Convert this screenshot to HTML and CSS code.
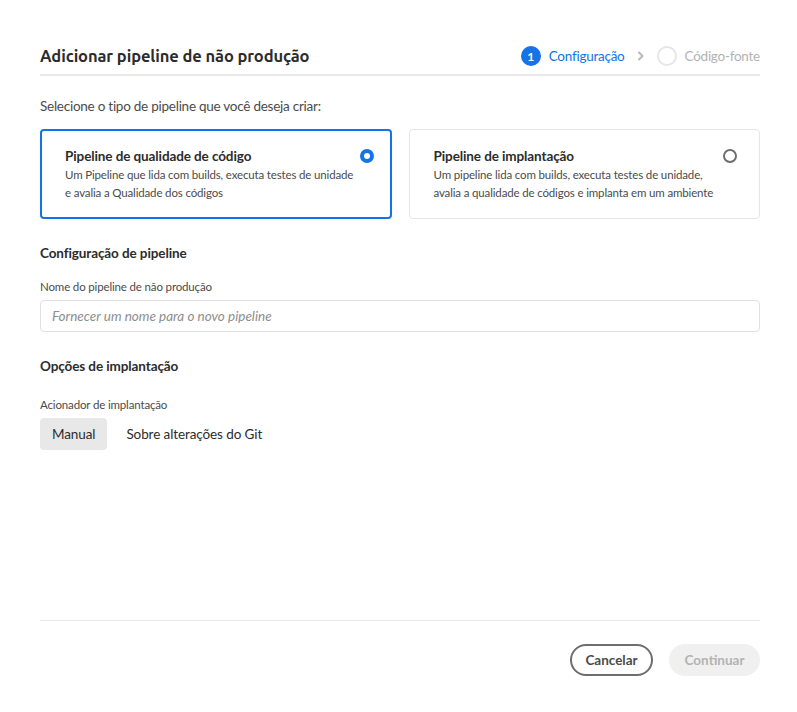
FILE: index.html
```html
<!DOCTYPE html>
<html lang="pt">
<head>
<meta charset="utf-8">
<link rel="stylesheet" href="styles.css">
</head>
<body>
<div class="dialog">
  <header class="head">
    <h1 class="title">Adicionar pipeline de não produção</h1>
    <div class="stepper">
      <span class="step-num">1</span>
      <span class="step-label active">Configuração</span>
      <svg class="chev" width="8" height="10" viewBox="0 0 8 10"><path d="M2 1.5 L5.5 5 L2 8.5" fill="none" stroke="#b8b8b8" stroke-width="2" stroke-linecap="round" stroke-linejoin="round"/></svg>
      <span class="step-empty"></span>
      <span class="step-label">Código-fonte</span>
    </div>
  </header>

  <p class="lead">Selecione o tipo de pipeline que você deseja criar:</p>

  <div class="cards">
    <div class="card selected">
      <div class="card-text">
        <div class="card-title">Pipeline de qualidade de código</div>
        <div class="card-desc">Um Pipeline que lida com builds, executa testes de unidade e avalia a Qualidade dos códigos</div>
      </div>
      <span class="radio on"></span>
    </div>
    <div class="card">
      <div class="card-text">
        <div class="card-title">Pipeline de implantação</div>
        <div class="card-desc">Um pipeline lida com builds, executa testes de unidade, avalia a qualidade de códigos e implanta em um ambiente</div>
      </div>
      <span class="radio"></span>
    </div>
  </div>

  <h2 class="section">Configuração de pipeline</h2>
  <label class="label">Nome do pipeline de não produção</label>
  <div class="input">Fornecer um nome para o novo pipeline</div>

  <h2 class="section">Opções de implantação</h2>
  <label class="label second">Acionador de implantação</label>
  <div class="segments">
    <span class="seg on">Manual</span>
    <span class="seg">Sobre alterações do Git</span>
  </div>

  <div class="spacer"></div>

  <footer class="foot">
    <button class="btn cancel">Cancelar</button>
    <button class="btn cont">Continuar</button>
  </footer>
</div>
</body>
</html>
```
FILE: styles.css
```css
* { box-sizing: border-box; }
html, body { margin: 0; padding: 0; background: #fff; }
body { font-family: Lato, "Liberation Sans", sans-serif; color: #2c2c2c; }
.dialog {
  width: 797px; height: 712px;
  padding: 40px 37px 36px 40px;
  display: flex; flex-direction: column;
}
.head {
  display: flex; align-items: center; justify-content: space-between;
  height: 36px; border-bottom: 2px solid #e8e8e8;
}
.title {
  margin: 0; font-family: Ubuntu, "Open Sans", sans-serif; font-weight: 600;
  font-size: 16.5px; letter-spacing: -0.1px; color: #2c2c2c; position: relative; top: -1px;
}
.stepper { display: flex; align-items: center; position: relative; top: -1px; }
.step-num {
  width: 20px; height: 20px; border-radius: 50%; background: #1473e6; color: #fff;
  font-size: 12px; font-weight: 700; display: flex; align-items: center; justify-content: center;
}
.step-label { font-size: 13.5px; letter-spacing: -0.25px; color: #b3b3b3; margin-left: 8px; }
.step-label.active { color: #1473e6; }
.chev { margin: 0 12px 0 12px; }
.step-empty { width: 20px; height: 20px; border-radius: 50%; border: 2px solid #e6e6e6; }
.lead { margin: 20px 0 0; font-size: 13.5px; letter-spacing: -0.25px; line-height: 20px; color: #4b4b4b; }
.cards { display: grid; grid-template-columns: 1fr 1fr; gap: 17px; margin-top: 13px; }
.card {
  height: 90px; border: 1px solid #e6e6e6; border-radius: 4px;
  padding: 16px 22px 0 24px; display: flex; justify-content: space-between;
}
.card.selected { border: 2px solid #1473e6; padding: 15px 16px 0 23px; }
.card-title { font-size: 13.5px; letter-spacing: -0.1px; font-weight: 700; color: #2c2c2c; line-height: 20px; }
.card-desc { font-size: 11.5px; letter-spacing: -0.15px; line-height: 18px; color: #4b4b4b; max-width: 300px; }
.radio {
  flex: none; width: 14px; height: 14px; border-radius: 50%; border: 2px solid #6e6e6e;
  margin-top: 3px; background: #fff;
}
.radio.on { border: 4px solid #1473e6; }
.section { margin: 24px 0 0; font-size: 13.5px; letter-spacing: -0.1px; font-weight: 700; line-height: 20px; color: #2c2c2c; }
.label { display: block; margin-top: 16px; font-size: 11.5px; letter-spacing: -0.15px; line-height: 16px; color: #4b4b4b; }
.label.second { margin-top: 21px; }
.input {
  margin-top: 5px; height: 32px; border: 1px solid #e1e1e1; border-radius: 4px;
  padding: 0 11px; display: flex; align-items: center;
  font-size: 13.5px; font-style: italic; color: #8e8e8e;
}
.segments { display: flex; margin-top: 5px; }
.seg {
  height: 32px; padding: 0 12px; display: flex; align-items: center;
  font-size: 13.5px; letter-spacing: -0.1px; color: #2c2c2c; border-radius: 4px;
}
.seg.on { background: #e8e8e8; margin-right: 7px; }
.spacer { flex: 1; }
.foot {
  border-top: 1px solid #e8e8e8; padding-top: 23px;
  display: flex; justify-content: flex-end; gap: 16px;
}
.btn {
  height: 32px; border-radius: 16px; font-family: inherit; font-size: 13.5px; font-weight: 700;
  padding: 0 12px;
}
.cancel { border: 2px solid #6e6e6e; background: #fff; color: #4b4b4b; width: 83px; }
.cont { border: none; background: #f0f0f0; color: #b3b3b3; width: 91px; }
```
